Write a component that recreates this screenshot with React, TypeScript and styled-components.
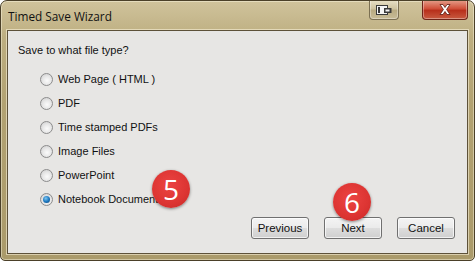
import React from "react";
import styled, { createGlobalStyle } from "styled-components";

const Global = createGlobalStyle`
  html, body { margin: 0; padding: 0; background: #ffffff; }
  body { font-family: "Liberation Sans", Arial, sans-serif; }
`;

const Window = styled.div`
  position: relative;
  box-sizing: border-box;
  width: 475px;
  height: 261px;
  display: flex;
  flex-direction: column;
  border: 1px solid #4b4029;
  border-radius: 7px 7px 5px 5px;
  background: linear-gradient(180deg, #d0c39c 0%, #bdae80 14%, #b2a272 40%, #aa9a6a 100%);
  box-shadow: inset 0 0 0 1px rgba(255, 250, 230, 0.45);
  overflow: hidden;
`;

const TitleBar = styled.div`
  height: 29px;
  display: flex;
  align-items: flex-start;
  justify-content: space-between;
  padding: 0 6px 0 7px;
`;

const Title = styled.div`
  margin-top: 7px;
  font-family: "Open Sans", "Liberation Sans", sans-serif;
  font-size: 11.8px;
  color: #111;
`;

const Controls = styled.div`
  display: flex;
  align-items: flex-start;
  gap: 23px;
  margin-top: -1px;
`;

const CtrlButton = styled.div<{ $close?: boolean }>`
  box-sizing: border-box;
  height: 20px;
  width: ${(p) => (p.$close ? "46px" : "30px")};
  border: 1px solid ${(p) => (p.$close ? "#6e2418" : "#7b6f52")};
  border-top: none;
  border-radius: 0 0 4px 4px;
  display: flex;
  align-items: center;
  justify-content: center;
  background: ${(p) =>
    p.$close
      ? "linear-gradient(180deg, #e6a08c 0%, #d0503a 45%, #b8301c 55%, #c85a40 100%)"
      : "linear-gradient(180deg, #e9e1c8 0%, #cfc3a0 45%, #b9ab82 55%, #c8bc98 100%)"};
  box-shadow: inset 0 0 0 1px rgba(255, 255, 255, 0.35);
`;

const Client = styled.div`
  position: relative;
  flex: 1;
  margin: 0 6px 6px 6px;
  background: #e7e6e4;
  border: 1px solid #5d5139;
  box-shadow: 0 0 0 1px rgba(255, 248, 225, 0.55);
  display: flex;
  flex-direction: column;
  padding: 12px 0 0 10px;
  font-family: "Liberation Sans", Arial, sans-serif;
  font-size: 11px;
  color: #111;
`;

const Question = styled.div`
  height: 14px;
  line-height: 14px;
`;

const Options = styled.div`
  display: flex;
  flex-direction: column;
  gap: 10px;
  margin: 15px 0 0 22px;
`;

const Option = styled.label`
  display: flex;
  align-items: center;
  gap: 5px;
  height: 14px;
  line-height: 14px;
`;

const Radio = styled.span<{ $checked?: boolean }>`
  position: relative;
  box-sizing: border-box;
  width: 13px;
  height: 13px;
  border-radius: 50%;
  border: 1px solid #8c8c8c;
  background: radial-gradient(circle at 55% 60%, #fbfbfb 0%, #e8e8e8 45%, #c9c9c9 100%);
  &::after {
    content: "";
    display: ${(p) => (p.$checked ? "block" : "none")};
    position: absolute;
    left: 2px;
    top: 2px;
    width: 7px;
    height: 7px;
    border-radius: 50%;
    background: radial-gradient(circle at 40% 35%, #7fc6f0 0%, #1f7bc2 50%, #0c3f73 100%);
  }
`;

const ButtonRow = styled.div`
  display: flex;
  justify-content: flex-end;
  gap: 15px;
  margin-top: 11px;
  padding-right: 12px;
`;

const Button = styled.button`
  box-sizing: border-box;
  width: 58px;
  height: 22px;
  border: 1px solid #707070;
  border-radius: 3px;
  background: linear-gradient(180deg, #f4f4f4 0%, #ebebeb 48%, #dddddd 52%, #cfcfcf 100%);
  box-shadow: inset 0 0 0 1px rgba(255, 255, 255, 0.7);
  font-family: "Liberation Sans", Arial, sans-serif;
  font-size: 11.5px;
  color: #111;
  padding: 0;
`;

const Badge = styled.div<{ $x: number; $y: number }>`
  position: absolute;
  left: ${(p) => p.$x}px;
  top: ${(p) => p.$y}px;
  width: 38px;
  height: 38px;
  border-radius: 50%;
  background: radial-gradient(circle at 45% 40%, #ec4442 0%, #dc3432 60%, #c42a28 100%);
  box-shadow: 0 1px 3px rgba(0, 0, 0, 0.45);
  color: #fff;
  font-family: "Open Sans", "Liberation Sans", sans-serif;
  font-size: 28px;
  line-height: 38px;
  text-align: center;
`;

const options = [
  "Web Page ( HTML )",
  "PDF",
  "Time stamped PDFs",
  "Image Files",
  "PowerPoint",
  "Notebook Document",
];

export default function App() {
  return (
    <>
      <Global />
      <Window>
        <TitleBar>
          <Title>Timed Save Wizard</Title>
          <Controls>
            <CtrlButton>
              <svg width="16" height="10" viewBox="0 0 16 10">
                <rect x="0.5" y="0.5" width="11" height="9" fill="#f4f4f4" stroke="#3a3a3a" />
                <rect x="2" y="2" width="2" height="6" fill="#3a3a3a" />
                <rect x="8" y="3" width="7.5" height="5" fill="#3a3a3a" />
                <rect x="9.5" y="4.5" width="4" height="2" fill="#f4f4f4" />
              </svg>
            </CtrlButton>
            <CtrlButton $close>
              <svg width="12" height="11" viewBox="0 0 12 11">
                <path
                  d="M1 0.5 L4 0.5 L6 3.5 L8 0.5 L11 0.5 L7.6 5.5 L11 10.5 L8 10.5 L6 7.5 L4 10.5 L1 10.5 L4.4 5.5 Z"
                  fill="#ffffff"
                  stroke="#5a1a10"
                  strokeWidth="0.8"
                />
              </svg>
            </CtrlButton>
          </Controls>
        </TitleBar>
        <Client>
          <Question>Save to what file type?</Question>
          <Options>
            {options.map((o, i) => (
              <Option key={o}>
                <Radio $checked={i === options.length - 1} />
                {o}
              </Option>
            ))}
          </Options>
          <ButtonRow>
            <Button>Previous</Button>
            <Button>Next</Button>
            <Button>Cancel</Button>
          </ButtonRow>
          <Badge $x={144} $y={139}>5</Badge>
          <Badge $x={325} $y={152}>6</Badge>
        </Client>
      </Window>
    </>
  );
}
